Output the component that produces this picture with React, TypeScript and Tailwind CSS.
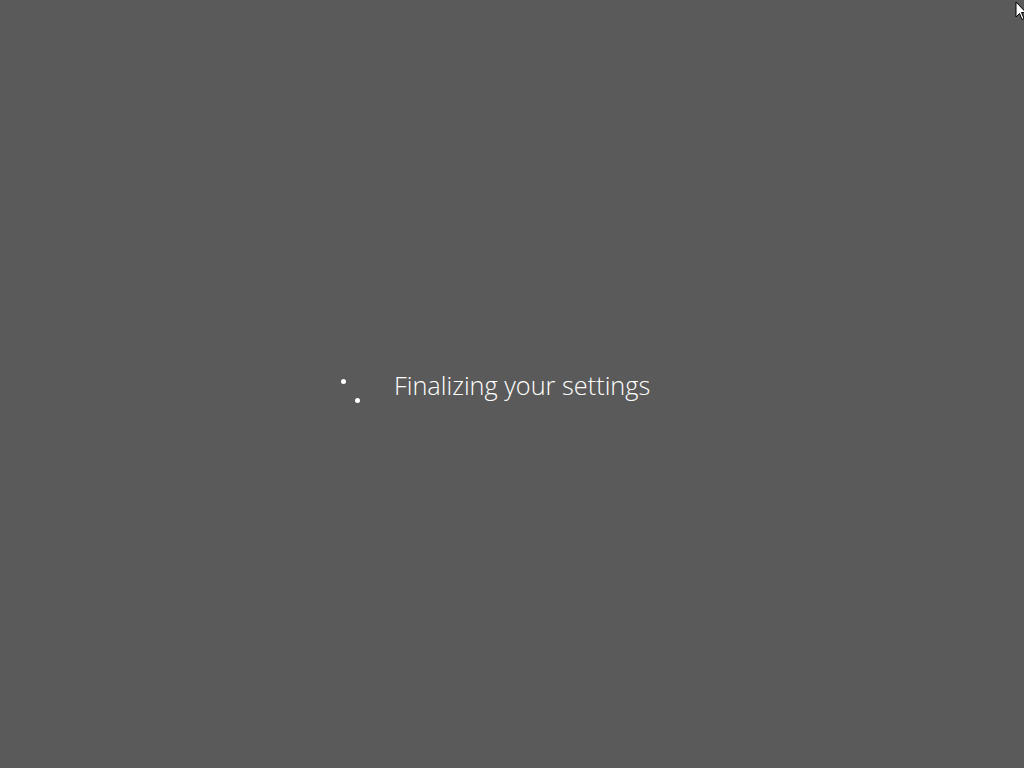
export default function App() {
  return (
    <div className="relative w-[1024px] h-[768px] bg-[#5a5a5a] overflow-hidden flex items-center pl-[340px]">
      {/* spinner dots */}
      <div className="relative w-[20px] h-[24px] mt-[12px]">
        <span className="absolute left-[1px] top-[1px] w-[5px] h-[5px] rounded-full bg-white" />
        <span className="absolute left-[15px] top-[20px] w-[5px] h-[5px] rounded-full bg-white" />
      </div>
      <p
        className="ml-[34px] mt-[3px] text-white text-[25.3px] font-light leading-none"
        style={{ fontFamily: '"Open Sans", "Noto Sans", sans-serif' }}
      >
        Finalizing your settings
      </p>

      {/* mouse cursor */}
      <svg className="absolute right-[-3px] top-[1px]" width="12" height="20" viewBox="0 0 12 20">
        <path d="M1 1 L1 16 L4.5 12.5 L7 18.5 L9 17.5 L6.5 11.5 L11 11.5 Z" fill="#fff" stroke="#000" strokeWidth="1" />
      </svg>
    </div>
  );
}
